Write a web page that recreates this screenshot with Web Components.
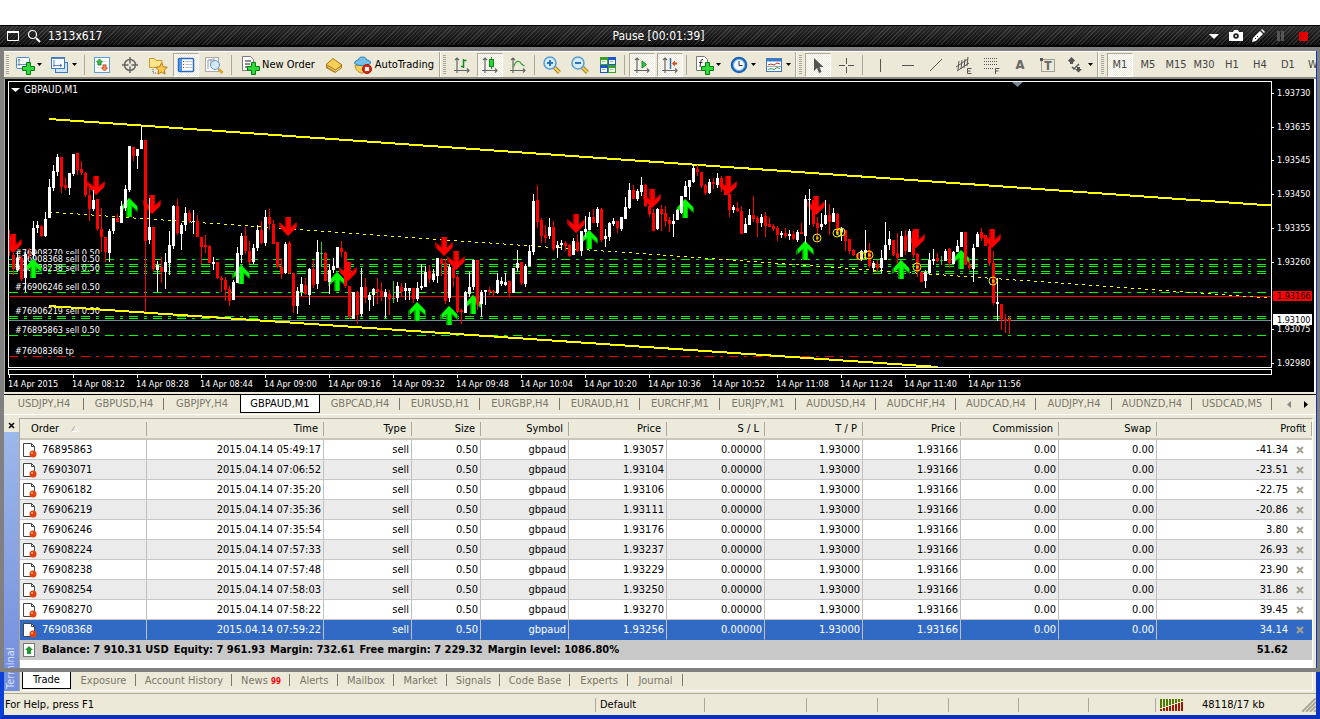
<!DOCTYPE html>
<html lang="en">
<head>
<meta charset="utf-8">
<title>GBPAUD,M1</title>
<style>
  body {
    margin: 0;
    background: #fff;
    color: #000;
    font: 11px/14px "DejaVu Sans Condensed", "DejaVu Sans", sans-serif;
  }
</style>
</head>
<body>
<screen-recorder>
  <trading-terminal></trading-terminal>
</screen-recorder>

<script>
// 20x20 drawings used by <tool-button icon="...">
const AXES = '<path d="M5 3v15M2 15.500h15M3 5l2-2 2 2M15 13.500l2 2-2 2" fill="none" stroke="#666" stroke-width="1.200"/>';
const PLUS = '<path d="M11.500 7.500h4v4h4v4h-4v4h-4v-4h-4v-4h4z" fill="#2fdc3c" stroke="#087a12"/>';
const GLASS = '<path d="M12.500 12.500l5 5" stroke="#a8812a" stroke-width="4"/><path d="M12.500 12.500l5 5" stroke="#f5cf58" stroke-width="2"/><circle cx="8" cy="8" r="6" fill="#d3ecfa" stroke="#5b9bd0" stroke-width="1.500"/>';

const ICONS = {
  'new-chart': '<rect x="1.500" y="2.500" width="13" height="11" rx="1" fill="#f4faff" stroke="#4f86c0"/><path d="M4 4v7M2.500 9.500h9M4 4l-1 1.500M4 4l1 1.500" stroke="#6b8bb0" fill="none"/>' + PLUS,
  'profiles': '<rect x="5.500" y="7.500" width="12" height="10" fill="#cfe4fa" stroke="#3f7ac0"/><rect x="1.500" y="2.500" width="13" height="11" fill="#f4faff" stroke="#3f7ac0"/><path d="M1.500 3.500h13M4 5v7M3 10.500h9M10 9l2 1.500-2 1.500" fill="none" stroke="#5f86b5"/>',
  'market': '<rect x="2.500" y="2.500" width="15" height="15" fill="#fff" stroke="#5b9be0"/><path d="M4 6.500h12M4 9.500h12M4 12.500h12" stroke="#e2e6ea"/><path d="M7.500 4l3 3h-1.500v3h-3V7h-1.500z" fill="#3cc04a" stroke="#0b7c19" stroke-width=".8"/><path d="M12.500 16l3-3h-1.500V10h-3v3h-1.500z" fill="#ff8b5a" stroke="#c53414" stroke-width=".8"/>',
  'crosshair': '<circle cx="10" cy="10" r="5.500" fill="none" stroke="#666" stroke-width="1.500"/><path d="M10 2v6.500M10 11.500v6.500M2 10h6.500M11.500 10h6.500" stroke="#666" stroke-width="1.500"/>',
  'favorites': '<path d="M1.500 3.500h5l1.500 2h6v7h-12.500z" fill="#fbe68c" stroke="#c49a2c"/><path d="M5 14v4h3" stroke="#555" fill="none" stroke-dasharray="1 1"/><path d="M13.500 8l1.800 3.700 4 .6-2.900 2.800.7 4-3.600-1.900-3.600 1.900.7-4-2.900-2.800 4-.6z" fill="#fbc84a" stroke="#b37618"/>',
  'navigator': '<rect x="2.500" y="3.500" width="15" height="13" rx="1" fill="#fff" stroke="#2a6ac0" stroke-width="1.500"/><path d="M4.500 4v12" stroke="#4d95e8" stroke-width="3"/><path d="M7 6.500h1M7 9.500h1M7 12.500h1" stroke="#b03030"/><path d="M9 6.500h7M9 9.500h7M9 12.500h7" stroke="#b8c4d4"/>',
  'tester': '<rect x="1.500" y="2.500" width="13" height="14" fill="#fafaf6" stroke="#aaa"/><path d="M4 5v9M7 4v7M10 3v7M4 5h6" stroke="#99a" fill="none"/><circle cx="11" cy="10" r="4.500" fill="#cce6fa" fill-opacity=".85" stroke="#669ac8"/><path d="M14.500 14l4 4" stroke="#dda52e" stroke-width="3"/>',
  'order': '<path d="M2.500 1.500h8l3 3v11h-11z" fill="#fff" stroke="#777"/><path d="M5 6h6M5 9h5M5 12h4" stroke="#666" stroke-width="1.500"/>' + PLUS,
  'book': '<path d="M2 10l7-6 9 6v3l-7 5-9-5z" fill="#b27b10"/><path d="M3.500 11.500l8 4.500 5.500-4" fill="none" stroke="#fff3c0"/><path d="M2 9.500l7-6 9 6.500-6.500 5z" fill="#f8cf58" stroke="#a8730c"/>',
  'auto': '<path d="M2 10c0 4 3 8 7 8s7-3 7-8z" fill="#f6cf5c" stroke="#b88920"/><path d="M1.500 8c0-2 3-3 4-3 0-2 1.500-3 4-3s4 1 4 3c2 0 4.500 1 4 3-1 2-4 2.500-8 2.500s-7-.5-8-2.500z" fill="#74bfe8" stroke="#2c7fae"/><circle cx="14" cy="14" r="4.500" fill="#e02c14" stroke="#a81404"/><rect x="12" y="12" width="4" height="4" fill="#fff"/>',
  'bars': AXES + '<path d="M11.500 4v9M9 11.500h2.500M11.500 5.500h3" stroke="#128a1e" stroke-width="1.500" fill="none"/>',
  'candles': AXES + '<path d="M11.500 2v12" stroke="#128a1e"/><rect x="9.500" y="4.500" width="4" height="7" fill="#27d43a" stroke="#128a1e"/>',
  'line': AXES + '<path d="M5.500 12c2-7 6-7 8-3l3 2" stroke="#2f9e3a" stroke-width="1.200" fill="none"/>',
  'zoom-in': GLASS + '<path d="M8 5v6M5 8h6" stroke="#2e72b8" stroke-width="2"/>',
  'zoom-out': GLASS + '<path d="M5 8h6" stroke="#2e72b8" stroke-width="2"/>',
  'tiles': '<path d="M2 2h8v8H2z" fill="#3ca028"/><path d="M10 2h8v8h-8z" fill="#1f57c8"/><path d="M2 10h8v8H2z" fill="#1f57c8"/><path d="M10 10h8v8h-8z" fill="#3ca028"/><path d="M3 5h6v4H3zM11 5h6v4h-6zM3 13h6v4H3zM11 13h6v4h-6z" fill="#eef7e8"/><path d="M4 6.500h3M12 6.500h3M4 14.500h3M12 14.500h3" stroke="#8bb"/>',
  'scroll': AXES + '<path d="M10 6l4.500 3.500-4.500 3.500z" fill="#35c844" stroke="#128a1e"/>',
  'shift': AXES + '<path d="M10.500 3v11" stroke="#2c6ca8" stroke-width="1.500"/><path d="M12 8.500l3-3v2h2v2h-2v2z" fill="#d24a1a"/>',
  'indicators': '<path d="M2.500 1.500h8l3 3v11h-11z" fill="#fff" stroke="#777"/><path d="M9 4.500c-2-.5-2 1-2.300 3l-.7 4.500M5 7.500h3.500" stroke="#333" fill="none"/>' + PLUS,
  'periods': '<circle cx="10" cy="10" r="7" fill="#f2f8ff" stroke="#1c64b4" stroke-width="2.600"/><circle cx="10" cy="10" r="5.500" fill="none" stroke="#7db8ee"/><path d="M10 6v4.500h3.500" stroke="#333" fill="none"/>',
  'templates': '<rect x="2.500" y="3.500" width="15" height="13" fill="#fff" stroke="#3f7ac0"/><path d="M2.500 5h15" stroke="#3f7ac0" stroke-width="3"/><path d="M4 10l3-1 3 1 3-2 3 1" stroke="#a83a1e" fill="none"/><path d="M4 14.500l3-1 3 1 3-2 3 1" stroke="#2f9e3a" fill="none"/><path d="M3 11.500h14" stroke="#9ab"/>',
  'cursor': '<path d="M6 3v13l3-3 2 5 2.500-1-2-5h4z" fill="#555"/>',
  'cross': '<path d="M10.500 3v6M10.500 12v6M3 10.500h6M12 10.500h6" stroke="#555"/>',
  'vline': '<path d="M10.500 4v13" stroke="#555"/>',
  'hline': '<path d="M4 10.500h12" stroke="#555"/>',
  'trend': '<path d="M4 16L16 4" stroke="#555"/>',
  'channel': '<path d="M2 12L14 4M3 16L15 8M5 6l-1 9M8 5l-1 9M11 4l-1 9M14 2l-1 9" stroke="#555" fill="none"/><path d="M17.500 13.500h-4v5h4M13.500 16h3" stroke="#555" fill="none"/>',
  'fibo': '<path d="M2 3.500h14M2 6.500h14M2 9.500h14M2 13.500h9" stroke="#555" stroke-dasharray="1 1"/><path d="M13.500 19v-5.500h4M13.500 16h3" stroke="#555" fill="none"/>',
  'arrows': '<path d="M5.500 2l3.500 3.500-2 2v1.500h-3v-1.500l-2-2z" fill="#555"/><path d="M6 12l2 2 5-5" stroke="#555" fill="none" stroke-width="1.500"/><path d="M11 12h3v2h2l-3.500 3.500-3.500-3.500h2z" fill="#555"/>',
  'label': '<rect x="3.500" y="4.500" width="13" height="12" fill="none" stroke="#555" stroke-dasharray="1 1"/><rect x="2" y="3" width="3" height="3" fill="#555"/><text x="10" y="15" text-anchor="middle" font-size="12" font-weight="bold" fill="#666">T</text>',
};

// Screen recorder chrome: title bar plus the grey capture frame over its content
class ScreenRecorder extends HTMLElement {
  constructor() {
    super();
    this.attachShadow({ mode: 'open' });
  }

  connectedCallback() {
    this.shadowRoot.innerHTML = `
      <style>
        :host { display: block; padding-top: 25px; }
        header {
          display: grid;
          grid-template-columns: 1fr auto 1fr;
          align-items: center;
          height: 22px;
          padding: 0 9px 0 6px;
          box-sizing: border-box;
          border-top: 1px solid #000;
          border-bottom: 2px solid #000;
          color: #fff;
          font-size: 12px;
          background:
            repeating-linear-gradient(135deg, rgba(255,255,255,.12) 0 1px, transparent 1px 3px),
            linear-gradient(#2c2c2c, #0c0c0c);
        }
        .side { display: flex; align-items: center; gap: 5px; }
        .right { justify-content: flex-end; gap: 6px; }
        button {
          padding: 0;
          border: 0;
          width: 16px;
          height: 16px;
          background: none;
        }
        svg { display: block; }
        .content { position: relative; padding-top: 4px; }
        .frame {
          position: absolute;
          inset: 0 0 47px 0;
          border: 4px solid #808080;
          border-right-width: 3px;
          pointer-events: none;
        }
      </style>
      <header>
        <div class="side">
          <button aria-label="Region"><svg width="16" height="16"><path d="M1.500 3.500h11v9h-11z" fill="none" stroke="#fff"/><path d="M1 4h12" stroke="#fff" stroke-width="2"/></svg></button>
          <button aria-label="Zoom"><svg width="16" height="16"><circle cx="5.500" cy="6.500" r="4" fill="none" stroke="#fff" stroke-width="1.200"/><path d="M9 10l4 4" stroke="#fff" stroke-width="2"/></svg></button>
          <span>1313x617</span>
        </div>
        <div>Pause [00:01:39]</div>
        <div class="side right">
          <button aria-label="Menu"><svg width="16" height="16"><path d="M2 6h10l-5 5z" fill="#fff"/></svg></button>
          <button aria-label="Snapshot"><svg width="16" height="16"><path d="M0 4h4l1-2h4l1 2h4v9H0z" fill="#fff"/><circle cx="7" cy="8" r="2.800" fill="#222"/><circle cx="7" cy="8" r="1" fill="#fff"/></svg></button>
          <button aria-label="Draw"><svg width="16" height="16"><path d="M1 14l1-4 7-7 3 3-7 7z" fill="#fff"/><path d="M10 2l1-1 3 3-1 1z" fill="#fff"/><path d="M4 11l1-1M6 9l1-1" stroke="#333"/></svg></button>
          <button aria-label="Pause"><svg width="16" height="16"><path d="M4 3h3v10H4zM8 3h3v10H8z" fill="#555"/></svg></button>
          <button aria-label="Stop"><svg width="16" height="16"><path d="M4 4h9v9H4z" fill="#e00000"/></svg></button>
        </div>
      </header>
      <div class="content">
        <slot></slot>
        <div class="frame"></div>
      </div>
    `;
  }
}

class ToolButton extends HTMLElement {
  constructor() {
    super();
    this.attachShadow({ mode: 'open' });
  }

  connectedCallback() {
    const icon = this.getAttribute('icon');
    const menu = this.hasAttribute('menu');
    const pressed = this.hasAttribute('pressed');
    const text = this.textContent.trim();
    this.shadowRoot.innerHTML = `
      <style>
        :host { display: block; flex: none; }
        button {
          display: flex;
          align-items: center;
          justify-content: center;
          gap: 2px;
          box-sizing: border-box;
          width: ${menu ? '35px' : icon && text ? 'auto' : '28px'};
          height: 24px;
          padding: ${icon && text ? '0 4px' : '0'};
          border: 1px solid transparent;
          font: inherit;
          color: inherit;
          background: none;
        }
        button.pressed {
          width: 26px;
          margin: 0 1px;
          border-color: #aca899 #fff #fff #aca899;
          background: repeating-conic-gradient(#fff 0 25%, #ece9d8 0 50%) 0 0 / 2px 2px;
        }
        svg { flex: none; display: block; }
      </style>
      <button class="${pressed ? 'pressed' : ''}" aria-label="${text || icon}">
        ${icon ? `<svg width="20" height="20">${ICONS[icon]}</svg>` : ''}
        <slot></slot>
        ${menu ? '<svg width="5" height="3"><path d="M0 0h5L2.500 3z"/></svg>' : ''}
      </button>
    `;
  }
}

class ToolBar extends HTMLElement {
  constructor() {
    super();
    this.attachShadow({ mode: 'open' });
  }

  connectedCallback() {
    this.shadowRoot.innerHTML = `
      <style>
        :host { display: block; }
        nav {
          display: flex;
          align-items: center;
          height: 25px;
          padding-left: 1px;
          overflow: hidden;
          border-top: 1px solid #fff;
          border-bottom: 2px solid #8c8a7c;
          background: #ece9d8;
        }
        .grip {
          flex: none;
          width: 3px;
          height: 20px;
          margin: 0 2px 0 1px;
          background: repeating-linear-gradient(#aca899 0 1px, transparent 1px 2px);
        }
        i { flex: none; width: 1px; height: 20px; margin: 0 3px 0 2px; background: #aca899; }
        i.wide { margin: 0 3px; }
        i.end { height: 25px; margin: 0 1px 0 0; border-right: 1px solid #fff; }
        .tf { color: #444; }
        .big { font-size: 13px; font-weight: bold; color: #666; }
      </style>
      <nav>
        <span class="grip"></span>
        <tool-button icon="new-chart" menu></tool-button>
        <tool-button icon="profiles" menu></tool-button>
        <i class="wide"></i>
        <tool-button icon="market"></tool-button>
        <tool-button icon="crosshair"></tool-button>
        <tool-button icon="favorites"></tool-button>
        <tool-button icon="navigator" pressed></tool-button>
        <tool-button icon="tester"></tool-button>
        <i class="wide"></i>
        <tool-button icon="order">New Order</tool-button>
        <tool-button icon="book"></tool-button>
        <tool-button icon="auto">AutoTrading</tool-button>
        <i class="end"></i>
        <span class="grip"></span>
        <tool-button icon="bars"></tool-button>
        <tool-button icon="candles" pressed></tool-button>
        <tool-button icon="line"></tool-button>
        <i></i>
        <tool-button icon="zoom-in"></tool-button>
        <tool-button icon="zoom-out"></tool-button>
        <tool-button icon="tiles"></tool-button>
        <i></i>
        <tool-button icon="scroll" pressed></tool-button>
        <tool-button icon="shift" pressed></tool-button>
        <i></i>
        <tool-button icon="indicators" menu></tool-button>
        <tool-button icon="periods" menu></tool-button>
        <tool-button icon="templates" menu></tool-button>
        <i class="end"></i>
        <span class="grip"></span>
        <tool-button icon="cursor" pressed></tool-button>
        <tool-button icon="cross"></tool-button>
        <i></i>
        <tool-button icon="vline"></tool-button>
        <tool-button icon="hline"></tool-button>
        <tool-button icon="trend"></tool-button>
        <tool-button icon="channel"></tool-button>
        <tool-button icon="fibo"></tool-button>
        <tool-button class="big">A</tool-button>
        <tool-button icon="label"></tool-button>
        <tool-button icon="arrows" menu></tool-button>
        <i class="end"></i>
        <span class="grip"></span>
        <tool-button class="tf" pressed>M1</tool-button>
        <tool-button class="tf">M5</tool-button>
        <tool-button class="tf">M15</tool-button>
        <tool-button class="tf">M30</tool-button>
        <tool-button class="tf">H1</tool-button>
        <tool-button class="tf">H4</tool-button>
        <tool-button class="tf">D1</tool-button>
        <tool-button class="tf">W1</tool-button>
      </nav>
    `;
  }
}

// One bar every 4px: colour, high, body top, body bottom, low
const BARS = `
r230,236,250,256 r253,255,269,275 w252,258,270,272 r256,258,279,281 w252,254,278,292 r248,254,255,258
w221,228,255,259 w221,225,228,233 r225,226,236,237 w212,219,236,237 w179,187,218,218 w165,171,188,191
w154,157,172,176 r157,157,187,193 r177,185,188,190 w173,173,188,195 w154,154,174,176 r153,153,170,175
r161,169,173,175 r172,173,195,197 r188,195,209,221 w190,200,209,211 r199,199,229,231 r208,229,237,252
r237,237,252,262 w229,231,253,262 w218,218,231,234 r214,218,222,222 w201,206,223,223 w185,189,208,211
w146,146,190,192 r147,147,156,161 w149,149,156,169 w125,140,149,149 r140,140,241,312 w198,227,240,244
r227,227,269,272 w261,265,270,292 r257,267,272,283 w253,262,272,289 w231,245,263,275 w205,206,246,249
r199,206,233,235 w223,225,234,250 w207,213,225,231 r210,213,221,223 w210,221,222,234 r215,221,237,237
r237,237,247,264 r235,245,247,253 r245,246,263,263 w257,262,264,270 r262,262,278,279 r276,278,280,292
r277,280,290,301 r286,289,301,306 w280,282,300,300 w247,253,283,283 w233,236,255,263 r227,236,251,254
r241,251,262,264 w244,248,262,264 w225,230,248,251 r221,230,243,244 w210,217,243,246 r209,217,224,230
r220,224,244,244 r242,242,267,268 r258,267,274,279 w242,244,273,274 r241,243,273,274 r273,273,306,313
w287,291,306,314 w277,284,292,296 r278,285,294,295 w268,269,295,305 r260,269,285,288 w240,252,284,289
g242,253,254,267 r252,253,281,281 w264,270,282,294 w258,266,270,273 w247,247,268,268 r241,248,252,257
r251,252,286,288 r286,286,317,319 w292,292,319,319 r291,292,315,324 w268,287,314,317 r278,287,298,303
w293,295,300,311 w288,289,295,306 r278,289,292,304 r282,291,297,301 w289,292,297,318 r290,294,299,315
g281,298,299,303 w282,286,298,302 r283,287,292,297 w283,288,291,300 w288,288,291,300 r288,288,299,303
w282,288,299,301 w264,286,288,290 w266,272,287,287 r265,271,279,283 w269,274,280,282 w258,258,276,283
r258,259,264,276 r259,263,301,304 w264,267,298,302 r265,268,278,287 r275,277,312,313 r309,310,312,324
w291,292,313,313 w272,287,294,297 w260,260,287,290 r260,260,305,310 w290,292,304,317 w290,290,292,305
r287,290,292,295 r290,291,293,296 w273,280,293,294 w277,281,284,286 w273,282,285,286 r281,281,293,298
w268,268,293,293 w250,263,268,272 r262,262,283,285 w264,266,284,287 w245,251,266,267 w194,201,252,255
r185,200,222,228 r218,220,236,243 r225,235,238,243 w218,227,236,239 r221,227,249,251 w241,245,248,258
w240,243,245,250 r241,243,246,251 r244,245,256,257 w238,241,255,255 r234,242,251,252 w231,231,251,256
w216,229,232,237 w212,217,230,230 r209,217,223,223 w207,209,223,227 r208,209,240,242 w229,236,239,247
w222,223,237,241 w218,221,224,226 r221,221,228,233 w217,217,229,231 w197,207,219,219 w183,190,208,209
r185,190,199,199 w189,191,199,201 w177,185,192,196 r184,185,206,207 r204,206,214,217 r209,213,231,231
w208,209,229,230 r205,209,214,231 r206,213,221,227 r217,220,224,232 w214,221,224,237 w209,210,220,220
w196,196,213,214 w181,186,197,197 w180,180,187,200 w164,168,182,183 r165,169,172,176 r172,172,186,188
r184,185,193,195 w179,182,193,194 r178,182,184,189 w173,178,185,188 r176,178,187,192 r185,186,195,195
r194,194,210,217 w205,207,210,213 r202,208,211,212 r206,211,234,234 w218,224,233,233 w209,215,225,225
r196,215,219,222 r216,218,223,237 w214,217,223,227 r212,216,226,237 r217,224,227,227 r224,226,229,231
r226,228,235,241 w231,233,235,238 r228,233,236,238 w230,234,236,240 r231,234,239,240 w230,232,240,242
r223,232,234,234 w195,199,236,243 w189,199,200,225 r200,200,224,227 r217,223,228,242 w213,224,227,230
w200,215,224,225 r204,215,222,235 w208,213,222,222 r213,214,233,233 w227,229,232,241 r230,230,241,251
r239,239,251,254 r249,250,255,256 r253,254,259,259 w250,251,259,261 w230,250,253,259 r243,250,266,268
w261,263,268,272 r260,264,268,273 w250,258,268,273 w222,245,260,260 w231,239,245,250 r240,240,255,256
r233,253,258,264 w231,236,257,257 r230,236,251,255 w229,231,252,252 r229,231,255,258 r253,254,272,277
r272,272,282,282 w270,272,281,288 w253,260,273,275 w249,259,261,265 r253,258,261,262 g256,260,261,265
w249,251,261,261 r248,249,263,268 w251,252,264,264 w240,246,252,252 w232,232,247,247 r232,232,265,265
r260,265,268,270 w244,248,269,282 w232,234,247,247 r228,232,238,241 r235,235,246,246 r237,246,263,266
r251,263,303,305 w278,302,304,321 r304,304,319,330 r314,319,321,333 r316,319,321,334`;

const SELLS = [[13, 234], [96, 176], [152, 195], [288, 217], [348, 262], [444, 237], [456, 251], [576, 214], [652, 189], [728, 176], [816, 196], [916, 229], [992, 229]];
const BUYS = [[33, 259], [129, 198], [241, 265], [337, 272], [417, 302], [449, 306], [473, 295], [589, 230], [685, 199], [805, 241], [901, 260], [961, 250]];
const MARKS = [[817, 238], [837, 233], [841, 232], [861, 256], [869, 255], [917, 267], [993, 281]];
const LEVELS = [259, 264, 266, 271, 273, 292, 316, 318, 335];
const TIMES = ['2015', '08:12', '08:28', '08:44', '09:00', '09:16', '09:32', '09:48', '10:04', '10:20', '10:36', '10:52', '11:08', '11:24', '11:40', '11:56'];
const PRICES = [['1.93730', 93], ['1.93635', 127], ['1.93545', 160], ['1.93450', 194], ['1.93355', 228], ['1.93260', 262], ['1.93075', 329], ['1.92980', 363]];

class PriceChart extends HTMLElement {
  constructor() {
    super();
    this.attachShadow({ mode: 'open' });
  }

  bars() {
    const colors = { w: '#fff', r: '#f00', g: '#32cd32' };
    return BARS.trim().split(/\s+/).map((bar, i) => {
      const [high, top, bottom, low] = bar.slice(1).split(',').map(Number);
      const x = 9 + i * 4;
      return `<path fill="${colors[bar[0]]}" d="M${x} ${high}h1V${low}h-1zM${x - 1} ${top}h3V${Math.max(bottom, top + 1)}h-3z"/>`;
    }).join('');
  }

  render() {
    this.shadowRoot.innerHTML = `
      <style>
        :host {
          display: block;
          padding: 0 2px 0 1px;
          border-left: 1px solid #aca899;
          background: #000;
          border-right: 2px solid #fff;
        }
        svg { display: block; width: 100%; height: auto; }
        text { fill: #fff; font-size: 9px; }
        .title { font-size: 10px; }
      </style>
      <svg viewBox="6 79 1306 313" role="img" aria-label="GBPAUD,M1 chart">
        <defs>
          <g id="buy">
            <path d="M0 0L9 9v5l-2-1-4-4v10h-6V9l-4 4-2 1V9z" fill="#008a00"/>
            <path d="M0 0L8 8v4L2.500 7.500V19h-4V7.500L-7 12V8z" fill="#0f0"/>
          </g>
          <g id="sell">
            <path d="M0 19L9 10V5L7 6 3 10V0h-6v10l-4-4-2-1v5z" fill="#a80000"/>
            <path d="M0 19l8-8V7l-5.500 4.500V0h-4v11.500L-7 7v4z" fill="#f00"/>
          </g>
          <g id="mark" fill="none" stroke="#e8e800"><circle r="4"/><path d="M-1 0h3M0-2v4"/></g>
        </defs>
        <g shape-rendering="crispEdges">
          <g fill="none" stroke="#0f0" stroke-dasharray="9 6 3 6">
            ${LEVELS.map((y) => `<path d="M9 ${y}.5H1271"/>`).join('')}
            <path d="M9 356.500H1271" stroke="#f00"/>
          </g>
          <path d="M9 296.500H1271" stroke="#f00"/>
          <path d="M9 320.500H1271" stroke="#778899"/>
        </g>
        <text x="15" y="256">#76908270 sell 0.50</text>
        <text x="15" y="271">#76908238 sell 0.50</text>
        <path d="M15 254h85v9H15z"/>
        <text x="15" y="262">#76908368 sell 0.50</text>
        <text x="15" y="290">#76906246 sell 0.50</text>
        <text x="15" y="314">#76906219 sell 0.50</text>
        <text x="15" y="333">#76895863 sell 0.50</text>
        <text x="15" y="354">#76908368 tp</text>
        <g fill="none" stroke="#ff0" stroke-width="2" shape-rendering="crispEdges">
          <path d="M49 119L1271 205.500M49 306L938 367"/>
          <path d="M49 212L1271 298" stroke-width="1" stroke-dasharray="3 4"/>
        </g>
        ${SELLS.map(([x, y]) => `<use href="#sell" x="${x}" y="${y}"/>`).join('')}
        ${BUYS.map(([x, y]) => `<use href="#buy" x="${x}" y="${y}"/>`).join('')}
        <g shape-rendering="crispEdges">
          ${this.bars()}
          <path d="M6 79h2v313h-2z"/>
          <path d="M1271.500 81.500H8.500V367.500H1271.500zM8.500 369.500H1271.500V374.500H8.500z" fill="none" stroke="#fff"/>
          ${TIMES.map((t, i) => `<path d="M${9 + i * 64} 375h1v3h-1z" fill="#fff"/>`).join('')}
          ${PRICES.map(([, y]) => `<path d="M1272 ${y}h2v1h-2z" fill="#fff"/>`).join('')}
        </g>
        ${MARKS.map(([x, y]) => `<use href="#mark" x="${x}" y="${y}"/>`).join('')}
        <path d="M1012 82h11l-5.500 5z" fill="#778899"/>
        <path d="M11 88h9l-4.500 4z" fill="#fff"/>
        <text class="title" x="24" y="93">GBPAUD,M1</text>
        ${TIMES.map((t, i) => `<text x="${8 + i * 64}" y="387">14 Apr ${t}</text>`).join('')}
        ${PRICES.map(([p, y]) => `<text x="1277" y="${y + 3}">${p}</text>`).join('')}
        <path d="M1273 291h41v10h-41z" fill="#f00"/>
        <text x="1277" y="299" style="fill:#000">1.93166</text>
        <path d="M1273 314h41v11h-41z" fill="#fff"/>
        <text x="1277" y="323" style="fill:#000">1.93100</text>
      </svg>
    `;
  }

  connectedCallback() {
    this.render();
  }
}

class ChartTabs extends HTMLElement {
  constructor() {
    super();
    this.attachShadow({ mode: 'open' });
  }

  connectedCallback() {
    const tabs = ['USDJPY,H4', 'GBPUSD,H4', 'GBPJPY,H4', 'GBPAUD,M1', 'GBPCAD,H4', 'EURUSD,H1', 'EURGBP,H4', 'EURAUD,H1', 'EURCHF,M1', 'EURJPY,M1', 'AUDUSD,H4', 'AUDCHF,H4', 'AUDCAD,H4', 'AUDJPY,H4', 'AUDNZD,H4', 'USDCAD,M5'];
    const narrow = ['GBPJPY,H4', 'EURJPY,M1', 'AUDJPY,H4'];
    this.shadowRoot.innerHTML = `
      <style>
        :host { display: block; background: #ece9d8; }
        nav {
          display: flex;
          height: 19px;
          margin-top: 2px;
          border-top: 1px solid #000;
        }
        button {
          flex: none;
          width: 80px;
          height: 18px;
          padding: 0;
          border: 0;
          font: inherit;
          color: #7a776a;
          background: linear-gradient(#7a776a, #7a776a) right 3px / 1px 12px no-repeat;
        }
        button.narrow { width: 76px; }
        button.plain { background: none; }
        button.active {
          border: 1px solid #000;
          border-top: 0;
          color: #000;
          background: #fff;
        }
        .scroll { display: flex; align-items: center; gap: 12px; margin-left: auto; padding-right: 7px; }
        .rule { height: 3px; border-top: 1px solid #fff; }
        .scroll button { width: 5px; height: 8px; background: none; }
        svg { display: block; }
      </style>
      <nav>
        ${tabs.map((t, i) => `<button class="${t === 'GBPAUD,M1' ? 'active' : ''} ${narrow.includes(t) ? 'narrow' : ''} ${i === 2 ? 'plain' : ''}">${t}</button>`).join('')}
        <div class="scroll">
          <button aria-label="Previous"><svg width="4" height="7"><path d="M4 0v7L0 3.500z" fill="#888"/></svg></button>
          <button aria-label="Next"><svg width="4" height="7"><path d="M0 0v7l4-3.500z"/></svg></button>
        </div>
      </nav>
      <div class="rule"></div>
    `;
  }
}

const ORDERS = [
  ['76895863', '05:49:17', '1.93057', '-41.34'],
  ['76903071', '07:06:52', '1.93104', '-23.51'],
  ['76906182', '07:35:20', '1.93106', '-22.75'],
  ['76906219', '07:35:36', '1.93111', '-20.86'],
  ['76906246', '07:35:54', '1.93176', '3.80'],
  ['76908224', '07:57:33', '1.93237', '26.93'],
  ['76908238', '07:57:48', '1.93229', '23.90'],
  ['76908254', '07:58:03', '1.93250', '31.86'],
  ['76908270', '07:58:22', '1.93270', '39.45'],
  ['76908368', '07:59:22', '1.93256', '34.14'],
];

class OrderTable extends HTMLElement {
  constructor() {
    super();
    this.attachShadow({ mode: 'open' });
  }

  row([id, time, open, profit]) {
    const cells = [`2015.04.14 ${time}`, 'sell', '0.50', 'gbpaud', open, '0.00000', '1.93000', '1.93166', '0.00', '0.00'];
    return `
      <tr>
        <td><div class="order">
          <svg width="16" height="16"><path d="M1.500 1.500h8l3 3v10h-11z" fill="#fff" stroke="#444"/><path d="M9.500 1.500v3h3" fill="none" stroke="#444"/><circle cx="11" cy="12" r="3.500" fill="#e2420e"/><circle cx="10" cy="11" r="1" fill="#ffb080"/></svg>
          ${id}
        </div></td>
        ${cells.map((c) => `<td>${c}</td>`).join('')}
        <td><div class="profit">
          ${profit}
          <button aria-label="Close ${id}"><svg width="9" height="8"><path d="M1 1l6 6M7 1L1 7" stroke="#a5a18f" stroke-width="2"/></svg></button>
        </div></td>
      </tr>`;
  }

  render() {
    const heads = ['Time', 'Type', 'Size', 'Symbol', 'Price', 'S / L', 'T / P', 'Price', 'Commission', 'Swap', 'Profit'];
    const widths = [127, 177, 88, 69, 88, 98, 98, 98, 98, 98, 98];
    this.shadowRoot.innerHTML = `
      <style>
        :host { display: block; background: #fff; }
        table { width: 100%; table-layout: fixed; border-collapse: separate; border-spacing: 0; }
        th, td {
          box-sizing: border-box;
          height: 20px;
          padding: 0 2px 0 0;
          text-align: right;
          font-weight: normal;
          white-space: nowrap;
          border-right: 1px solid #c0c0c0;
        }
        th {
          height: 21px;
          padding: 0 6px 0 0;
          border: 0;
          border-bottom: 2px solid #cbc7b8;
          background: linear-gradient(#aca899, #aca899) right 3px / 1px 14px no-repeat #ebeadb;
        }
        th:first-child { padding-left: 11px; text-align: left; }
        tbody td { border-bottom: 1px solid #c8c8c8; }
        tr > :last-child { border-right: 0; }
        tbody tr:nth-child(even) { background: #ebebeb; }
        tbody tr:last-child { color: #fff; background: #316ac5; }
        tbody tr:last-child td { border-bottom-color: #316ac5; }
        tfoot { background: #c8c8c8; }
        tfoot td { border: 0; font-weight: bold; }
        .order { display: flex; align-items: center; gap: 4px; padding-left: 2px; }
        .summary { gap: 5px; }
        .summary svg { margin-right: -1px; }
        .profit { display: flex; align-items: center; justify-content: flex-end; gap: 8px; padding-right: 5px; }
        tfoot .profit { padding-right: 22px; }
        button { display: block; padding: 0; border: 0; background: none; }
        svg { flex: none; display: block; }
        .sort { display: inline-block; margin-left: 9px; }
      </style>
      <table>
        <colgroup>${widths.map((w) => `<col style="width:${w}px">`).join('')}<col></colgroup>
        <thead>
          <tr>
            <th>Order <svg class="sort" width="8" height="7"><path d="M.5 6.500L4 .5" stroke="#aca899"/><path d="M4 .5l3.500 6H.5" fill="none" stroke="#fff"/></svg></th>
            ${heads.map((h) => `<th>${h}</th>`).join('')}
          </tr>
        </thead>
        <tbody>${ORDERS.map((o) => this.row(o)).join('')}</tbody>
        <tfoot>
          <tr>
            <td colspan="11"><div class="order summary">
              <svg width="16" height="16"><rect x="1.500" y="1.500" width="11" height="13" fill="#fff" stroke="#777"/><path d="M7 4l4 4h-2v4h-4V8h-2z" fill="#1d9a2a"/></svg>
              <span>Balance: 7 910.31 USD</span><span>Equity: 7 961.93</span><span>Margin: 732.61</span><span>Free margin: 7 229.32</span><span>Margin level: 1086.80%</span>
            </div></td>
            <td><div class="profit">51.62</div></td>
          </tr>
        </tfoot>
      </table>
    `;
  }

  connectedCallback() {
    this.render();
  }
}

class TerminalPanel extends HTMLElement {
  constructor() {
    super();
    this.attachShadow({ mode: 'open' });
  }

  connectedCallback() {
    const tabs = [['Exposure', 65], ['Account History', 96], ['News', 58], ['Alerts', 48], ['Mailbox', 56], ['Market', 53], ['Signals', 53], ['Code Base', 70], ['Experts', 58], ['Journal', 55]];
    this.shadowRoot.innerHTML = `
      <style>
        :host {
          display: grid;
          grid-template-columns: 15px 1fr;
          padding: 0 3px 2px 0;
          background: #ece9d8;
        }
        .strip { display: flex; flex-direction: column; }
        .close { height: 14px; padding: 0; border: 0; background: none; }
        .close svg { display: block; margin: 0 auto; }
        .caption {
          flex: 1;
          writing-mode: vertical-rl;
          transform: rotate(180deg);
          padding-top: 2px;
          line-height: 14px;
          font-size: 11px;
          color: #d8e4f8;
          background: linear-gradient(#738cdc, #9db8ea);
        }
        .main { border-left: 1px solid #aca899; border-top: 1px solid #aca899; border-right: 1px solid #fff; }
        .sheet { padding-bottom: 12px; background: #fff; }
        nav {
          display: flex;
          height: 18px;
          padding-left: 2px;
          border-bottom: 1px solid #fff;
        }
        nav button {
          flex: none;
          height: 17px;
          padding: 0;
          border: 0;
          font: inherit;
          color: #7a776a;
          background: linear-gradient(#7a776a, #7a776a) right 2px / 1px 12px no-repeat;
        }
        nav button.active {
          width: 49px;
          color: #000;
          background: #fff;
          border: 1px solid #000;
          border-top: 0;
        }
        small { font-size: 8px; line-height: 8px; font-weight: bold; color: #f00; }
      </style>
      <div class="strip">
        <button class="close" aria-label="Close terminal"><svg width="7" height="7"><path d="M1 1l5 5M6 1L1 6" stroke="#000" stroke-width="1.500"/></svg></button>
        <div class="caption">Terminal</div>
      </div>
      <div class="main">
        <div class="sheet"><order-table></order-table></div>
        <nav>
          <button class="active">Trade</button>
          ${tabs.map(([t, w]) => `<button style="width:${w}px">${t}${t === 'News' ? ' <small>99</small>' : ''}</button>`).join('')}
        </nav>
      </div>
    `;
  }
}

class StatusBar extends HTMLElement {
  constructor() {
    super();
    this.attachShadow({ mode: 'open' });
  }

  connectedCallback() {
    // green part shrinks as the red part grows
    const columns = [0, 1, 2, 3, 4, 5, 6, 7].map((i) => `<path d="M${i * 3} 0h2v${9 - i}h-2z" fill="#4f7a00"/><path d="M${i * 3} ${10 - i}h2V12h-2z" fill="#a01800"/>`).join('');
    this.shadowRoot.innerHTML = `
      <style>
        :host {
          display: grid;
          grid-template-columns: 1fr 109px 102px 71px 71px 70px 70px 67px 161px;
          align-items: center;
          height: 21px;
          border-top: 1px solid #aca899;
          background: #ece9d8;
        }
        span {
          box-sizing: border-box;
          height: 14px;
          padding-left: 4px;
          white-space: nowrap;
          border-left: 1px solid #aca899;
        }
        span:first-of-type { padding-left: 1px; border: 0; }
        .traffic { display: flex; align-items: center; gap: 19px; }
        .grab { margin-left: auto; align-self: flex-end; }
        svg { display: block; }
      </style>
      <span>For Help, press F1</span>
      <span>Default</span>
      <span></span><span></span><span></span><span></span><span></span><span></span>
      <span class="traffic">
        <svg width="23" height="12">${columns}</svg>
        48118/17 kb
        <svg class="grab" width="14" height="14"><path d="M0 14L14 0M4 14L14 4M8 14l6-6M12 14l2-2" stroke="#aca899" stroke-width="2"/></svg>
      </span>
    `;
  }
}

class TradingTerminal extends HTMLElement {
  constructor() {
    super();
    this.attachShadow({ mode: 'open' });
  }

  connectedCallback() {
    this.shadowRoot.innerHTML = `
      <style>
        :host {
          display: block;
          border: 4px solid #0a3fd8;
          border-top: 0;
          border-right-color: #0a34c4;
          border-bottom-color: #0830c0;
          background: #ece9d8;
        }
      </style>
      <tool-bar></tool-bar>
      <price-chart></price-chart>
      <chart-tabs></chart-tabs>
      <terminal-panel></terminal-panel>
      <status-bar></status-bar>
    `;
  }
}

customElements.define('tool-button', ToolButton);
customElements.define('tool-bar', ToolBar);
customElements.define('price-chart', PriceChart);
customElements.define('chart-tabs', ChartTabs);
customElements.define('order-table', OrderTable);
customElements.define('terminal-panel', TerminalPanel);
customElements.define('status-bar', StatusBar);
customElements.define('trading-terminal', TradingTerminal);
customElements.define('screen-recorder', ScreenRecorder);
</script>
</body>
</html>
